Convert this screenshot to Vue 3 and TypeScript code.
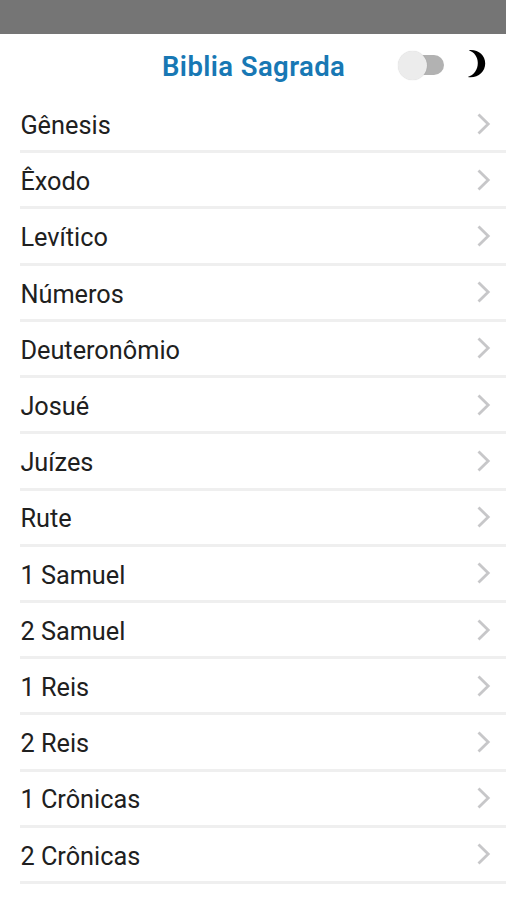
<script setup lang="ts">
const books: string[] = ['Gênesis', 'Êxodo', 'Levítico', 'Números', 'Deuteronômio', 'Josué', 'Juízes', 'Rute', '1 Samuel', '2 Samuel', '1 Reis', '2 Reis', '1 Crônicas', '2 Crônicas']
</script>

<template>
  <main class="app">
    <div class="status"></div>
    <header class="header">
      <h1 class="title">Biblia Sagrada</h1>
      <div class="theme">
        <span class="switch"><span class="thumb"></span></span>
        <svg class="moon" width="19" height="30" viewBox="0 0 19 30">
          <path d="M1.8 1.2C11 .2 18.2 6 18.2 14.5C18.2 23 10.5 29.5 .8 28C7 26 10.8 20.5 10.8 14C10.8 8 7.5 3.2 1.8 1.2Z" fill="#000" />
        </svg>
      </div>
    </header>
    <ul class="list">
      <li v-for="book in books" :key="book" class="row">
        <span class="name">{{ book }}</span>
        <svg class="chevron" width="14" height="22" viewBox="0 0 14 22">
          <path d="M1.5 1.5 11.2 11 1.5 20.5" fill="none" stroke="#c7c7c9" stroke-width="2.8" />
        </svg>
      </li>
    </ul>
  </main>
</template>

<style>
body { margin: 0; background: #fff; }
</style>

<style scoped>
.app { width: 506px; height: 900px; overflow: hidden; background: #fff; font-family: Roboto, sans-serif; }
.status { height: 34px; background: #757575; }
.header { height: 63px; box-sizing: border-box; display: grid; grid-template-columns: 162px 1fr auto; align-items: center; padding-right: 20px; }
.title { grid-column: 2; margin: 3px 0 0; font-size: 27.5px; line-height: 32px; font-weight: 600; letter-spacing: 0.4px; color: #1878b4; white-space: nowrap; }
.theme { display: flex; align-items: center; gap: 23px; }
.switch { width: 45px; height: 20px; margin-top: -1px; border-radius: 10px; background: #b2b2b2; display: flex; align-items: center; }
.thumb { flex: none; width: 29px; height: 29px; margin-left: -1.5px; border-radius: 50%; background: #ececec; box-shadow: 0 0 1px #0003; }
.moon { margin-bottom: 4px; }
.list { list-style: none; margin: 0; padding: 0 0 0 20.4px; }
.row { box-sizing: border-box; height: 56.23px; display: flex; align-items: center; justify-content: space-between; border-bottom: 3px solid #efefef; padding-right: 15px; }
.name { padding-top: 4.5px; font-size: 25.3px; line-height: 30px; font-weight: 400; color: #202020; }
</style>
